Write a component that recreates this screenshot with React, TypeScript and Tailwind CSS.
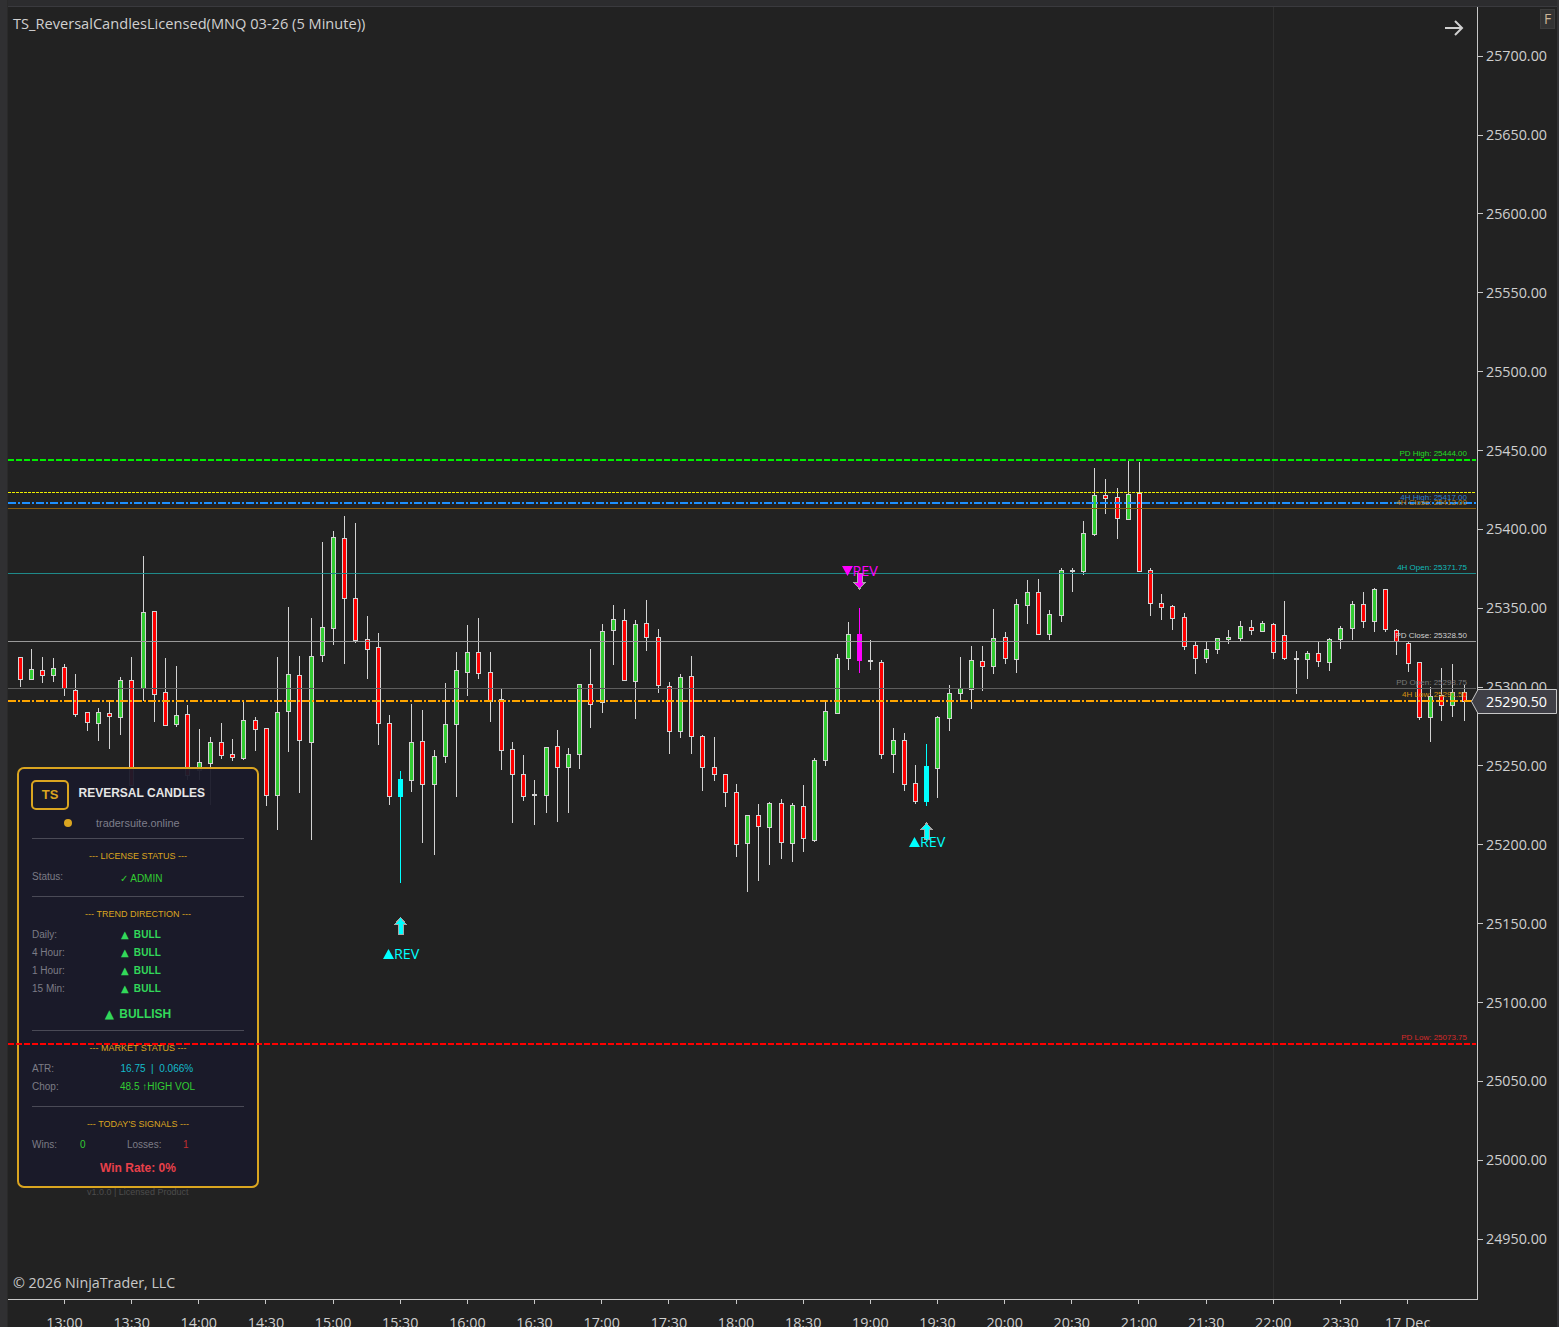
import React from "react";

type Kind = "r" | "g" | "c" | "m" | "d";
type Bar = [number, number, number, number, Kind];

const BARS: Bar[] = [
  [657,657,679,687,"r"],[649,669,679,679,"g"],[657,670,675,683,"r"],[658,668,675,682,"g"],[664,667,688,696,"r"],
  [674,690,714,717,"r"],[712,712,722,731,"r"],[708,712,723,741,"g"],[702,713,716,749,"r"],[677,680,717,735,"g"],
  [657,680,785,785,"r"],[556,612,688,701,"g"],[611,611,694,722,"r"],[658,692,725,726,"r"],[666,715,724,727,"g"],
  [705,714,775,780,"r"],[729,762,770,780,"g"],[737,742,763,805,"g"],[723,742,755,759,"r"],[739,754,757,761,"r"],
  [702,720,758,760,"g"],[717,720,729,751,"r"],[728,728,795,806,"r"],[657,712,795,830,"g"],[607,674,711,752,"g"],
  [656,675,740,793,"r"],[618,656,742,840,"g"],[542,627,655,662,"g"],[531,537,628,645,"g"],[516,538,598,664,"r"],
  [523,598,640,643,"r"],[616,639,649,679,"r"],[633,647,723,745,"r"],[715,723,796,805,"r"],[771,779,797,883,"c"],
  [704,742,780,792,"g"],[710,741,784,843,"r"],[750,756,784,855,"g"],[683,724,756,763,"g"],[652,670,724,797,"g"],
  [625,652,672,696,"g"],[618,652,673,679,"r"],[652,672,701,722,"r"],[688,699,750,770,"r"],[742,749,774,823,"r"],
  [755,774,796,801,"r"],[780,794,795,825,"d"],[747,747,795,813,"g"],[730,746,767,822,"r"],[748,754,767,813,"g"],
  [684,684,754,769,"g"],[649,684,704,728,"r"],[624,631,702,713,"g"],[605,619,630,665,"g"],[609,620,680,681,"r"],
  [620,624,681,719,"g"],[600,623,637,651,"r"],[629,637,685,693,"r"],[682,686,731,754,"r"],[674,677,731,738,"g"],
  [656,676,736,754,"r"],[735,736,767,791,"r"],[737,767,774,781,"r"],[774,774,792,807,"r"],[784,792,844,857,"r"],
  [815,815,843,892,"g"],[804,815,826,881,"r"],[802,803,827,865,"g"],[799,803,842,859,"r"],[803,805,843,862,"g"],
  [785,806,838,852,"r"],[758,760,840,842,"g"],[702,711,760,766,"g"],[654,658,713,714,"g"],[622,634,658,670,"g"],
  [608,634,661,673,"m"],[640,660,661,670,"d"],[660,662,754,759,"r"],[728,740,754,773,"g"],[733,740,784,791,"r"],
  [765,783,801,804,"r"],[744,766,802,806,"c"],[716,717,768,798,"g"],[685,693,718,731,"g"],[657,688,693,700,"g"],
  [646,660,689,709,"g"],[646,661,666,691,"r"],[609,638,666,674,"g"],[632,637,658,664,"r"],[599,604,659,673,"g"],
  [580,592,605,624,"g"],[579,592,634,635,"r"],[610,614,634,640,"g"],[568,570,615,622,"g"],[568,570,571,592,"d"],
  [521,533,571,575,"g"],[468,495,534,536,"g"],[479,495,498,514,"r"],[488,497,518,539,"r"],[459,494,519,519,"g"],
  [462,493,571,571,"r"],[568,570,603,616,"r"],[594,603,607,620,"r"],[605,606,618,630,"r"],[613,617,646,650,"r"],
  [642,645,658,674,"r"],[642,649,658,663,"g"],[638,638,649,654,"g"],[630,637,639,644,"g"],[621,626,638,641,"g"],
  [620,627,630,635,"r"],[621,623,631,632,"g"],[623,624,652,659,"r"],[601,635,658,660,"r"],[651,658,659,694,"d"],
  [651,653,659,679,"g"],[642,653,661,667,"r"],[638,639,662,671,"g"],[626,628,639,649,"g"],[601,604,628,640,"g"],
  [592,604,621,628,"r"],[588,589,621,632,"g"],[589,589,629,632,"r"],[629,630,641,655,"r"],[642,643,663,672,"r"],
  [662,662,717,720,"r"],[687,696,717,742,"g"],[668,695,705,721,"r"],[664,692,705,717,"g"],[685,692,701,721,"r"],
];

const WICK = "#d3d3d3";
const barX = (i: number) => Math.floor(20 + i * 11.194) + 0.5;

const LEVELS = [
  { y: 460, w: 2, c: "#00ee00", dash: "6 2" },
  { y: 492.5, w: 1, c: "#eeee00", dash: "3 1" },
  { y: 503, w: 2, c: "#1e90ff", dash: "8 2 2 2" },
  { y: 508.5, w: 1, c: "#8a5f10" },
  { y: 573.5, w: 1, c: "#1f8a8a" },
  { y: 641.5, w: 1, c: "#9a9a9a" },
  { y: 688.5, w: 1, c: "#5e5e5e" },
  { y: 701, w: 2, c: "#ffa500", dash: "8 2 2 2" },
  { y: 1044, w: 2, c: "#ff0000", dash: "6 2" },
];

const LEVEL_LABELS = [
  { y: 453.5, t: "PD High: 25444.00", c: "#22dd22" },
  { y: 497.5, t: "4H High: 25417.00", c: "#2f7fd0" },
  { y: 502.5, t: "4H Close: 25413.00", c: "#b8801c" },
  { y: 567.5, t: "4H Open: 25371.75", c: "#11bbbb" },
  { y: 635.5, t: "PD Close: 25328.50", c: "#d0d0d0" },
  { y: 682.5, t: "PD Open: 25298.75", c: "#787878" },
  { y: 694.5, t: "4H Low: 25291.50", c: "#d89410" },
  { y: 1037.5, t: "PD Low: 25073.75", c: "#d62a2a" },
];

const PRICES = ["25700.00","25650.00","25600.00","25550.00","25500.00","25450.00","25400.00","25350.00","25300.00","25250.00","25200.00","25150.00","25100.00","25050.00","25000.00","24950.00"];
const TIMES = ["13:00","13:30","14:00","14:30","15:00","15:30","16:00","16:30","17:00","17:30","18:00","18:30","19:00","19:30","20:00","20:30","21:00","21:30","22:00","23:30","17 Dec"];

function Candles() {
  return (
    <svg className="absolute inset-0 h-full w-full" viewBox="8 7 1469 1292" shapeRendering="crispEdges">
      <line x1="1273.5" y1="7" x2="1273.5" y2="1299" stroke="#2f2f2f" />
      {BARS.map(([hi, top, bot, lo, k], i) => {
        const x = barX(i);
        const special = k === "c" || k === "m";
        const col = k === "c" ? "#00ffff" : k === "m" ? "#ff00ff" : WICK;
        return (
          <g key={i}>
            <line x1={x} x2={x} y1={hi} y2={lo} stroke={col} />
            {special ? (
              <rect x={x - 2.5} y={top} width={5} height={bot - top} fill={col} />
            ) : k === "d" ? (
              <rect x={x - 2.5} y={top} width={5} height={2} fill={WICK} />
            ) : (
              <rect x={x - 2} y={top + 0.5} width={4} height={bot - top} fill={k === "r" ? "#ff0000" : "#32cd32"} stroke={WICK} />
            )}
          </g>
        );
      })}
    </svg>
  );
}

function Levels() {
  return (
    <svg className="pointer-events-none absolute inset-0 h-full w-full" viewBox="8 7 1469 1292" shapeRendering="crispEdges">
      {LEVELS.map((l) => (
        <line key={l.y} x1="8" x2="1476" y1={l.y} y2={l.y} stroke={l.c} strokeWidth={l.w} strokeDasharray={l.dash} />
      ))}
      <path d="M400.5 917.5 L406 924 H403 V934 H398 V924 H395 Z" fill="#00ffff" stroke="#a8a8a8" />
      <path d="M926.5 823 L932 829.5 H929 V839 H924 V829.5 H921 Z" fill="#00ffff" stroke="#a8a8a8" />
      <path d="M859.5 589 L865 582.5 H862 V573 H857 V582.5 H854 Z" fill="#ff00ff" stroke="#a8a8a8" />
      <polygon points="842,566 853,566 847.5,576" fill="#ff00ff" shapeRendering="auto" />
      <polygon points="909,847 920,847 914.5,837" fill="#00ffff" shapeRendering="auto" />
      <polygon points="383,959 394,959 388.5,949" fill="#00ffff" shapeRendering="auto" />
    </svg>
  );
}

function Divider({ top }: { top: string }) {
  return <div className={`h-px bg-[#4a4a56] ${top}`} />;
}

function Section({ title, mt }: { title: string; mt: string }) {
  return (
    <div className={`h-4 text-center text-[9px] leading-4 text-[#daa520] ${mt}`}>{`--- ${title} ---`}</div>
  );
}

function Tri({ className }: { className: string }) {
  return <span className={`font-['DejaVu_Sans',sans-serif] font-normal ${className}`}>▲</span>;
}

function TrendRow({ label }: { label: string }) {
  return (
    <div className="flex h-[18px] items-center">
      <span className="w-[89px] text-[10px] text-[#7c7c86]">{label}</span>
      <span className="whitespace-nowrap text-[10px] font-bold tracking-[0.15px] text-[#32d85a]">
        <Tri className="mr-[2px] text-[10px]" /> BULL
      </span>
    </div>
  );
}

function Panel() {
  return (
    <div className="absolute left-[9px] top-[760px] h-[421px] w-[242px] rounded-[7px] border-2 border-[#daa520] bg-[#1a1a2a]/95 px-[13px] font-['Liberation_Sans',Arial,sans-serif]">
      <div className="mt-[11px] -ml-px flex items-center gap-[9.5px]">
        <div className="flex h-[30px] w-[38px] items-center justify-center rounded-[5px] border-2 border-[#daa520] pb-[2px] text-[13px] font-bold leading-none text-[#daa520]">TS</div>
        <div className="-mt-[4px] text-[12px] font-bold text-[#e6e6e6]">REVERSAL CANDLES</div>
      </div>
      <div className="mt-[5px] flex h-4 items-center">
        <span className="ml-[32px] h-2 w-2 rounded-full bg-[#daa520]" />
        <span className="ml-[24px] text-[10.9px] text-[#7e7e8a]">tradersuite.online</span>
      </div>
      <Divider top="mt-[7px]" />
      <Section title="LICENSE STATUS" mt="mt-[9px]" />
      <div className="mt-[5px] flex h-[18px]">
        <span className="w-[88px] text-[10px] leading-[15px] text-[#7c7c86]">Status:</span>
        <span className="text-[10px] leading-[19px] text-[#32cd32]">✓ ADMIN</span>
      </div>
      <Divider top="mt-[9px]" />
      <Section title="TREND DIRECTION" mt="mt-[9px]" />
      <div className="mt-[3px] flex flex-col">
        <TrendRow label="Daily:" />
        <TrendRow label="4 Hour:" />
        <TrendRow label="1 Hour:" />
        <TrendRow label="15 Min:" />
      </div>
      <div className="mt-[7px] h-5 text-center text-[12px] font-bold leading-5 text-[#32d85a]">
        <Tri className="mr-[2px] text-[12px]" /> BULLISH
      </div>
      <Divider top="mt-[6px]" />
      <Section title="MARKET STATUS" mt="mt-[9px]" />
      <div className="mt-[3px] flex h-[18px] items-center">
        <span className="w-[88.5px] text-[10px] text-[#7c7c86]">ATR:</span>
        <span className="whitespace-pre text-[10px] text-[#14bccc]">16.75  |  0.066%</span>
      </div>
      <div className="flex h-[18px] items-center">
        <span className="w-[88px] text-[10px] text-[#7c7c86]">Chop:</span>
        <span className="text-[10px] text-[#32cd32]">48.5 ↑HIGH VOL</span>
      </div>
      <Divider top="mt-[11px]" />
      <Section title="TODAY'S SIGNALS" mt="mt-[9px]" />
      <div className="mt-[3px] flex h-[18px] items-center text-[10px]">
        <span className="w-[48px] text-[#7c7c86]">Wins:</span>
        <span className="w-[47px] text-[#32cd32]">0</span>
        <span className="w-[56px] text-[#7c7c86]">Losses:</span>
        <span className="text-[#c03030]">1</span>
      </div>
      <div className="mt-[5px] h-5 text-center text-[12px] font-bold leading-5 text-[#e8404a]">Win Rate: 0%</div>
    </div>
  );
}

export default function App() {
  return (
    <div className="flex h-[1327px] w-[1559px] overflow-hidden bg-[#222222] font-['Open_Sans',sans-serif] text-[#cfcfcf]">
      <div className="w-[8px] shrink-0 border-r border-[#2a2a2a] bg-[#303032]" />
      <div className="flex min-w-0 flex-1 flex-col">
        <div className="h-[7px] shrink-0 border-b border-[#3a3a3e] bg-[#2c2c2e]" />
        <div className="flex min-h-0 flex-1">
          <div className="flex w-[1470px] shrink-0 flex-col">
            <div className="relative h-[1293px] shrink-0 border-b border-r border-[#c8c8c8]">
              <Candles />
              <Panel />
              <Levels />
              <div className="absolute left-[79px] top-[1178px] whitespace-nowrap text-[9px] leading-[14px] text-[#4c4c4c] font-['Liberation_Sans',Arial,sans-serif]">v1.0.0 | Licensed Product</div>
              <div className="absolute left-[5px] top-[5px] whitespace-nowrap text-[14.62px] leading-[22px] text-[#d0d0d0]">TS_ReversalCandlesLicensed(MNQ 03-26 (5 Minute))</div>
              <div className="absolute left-[5px] top-[1265px] whitespace-nowrap text-[14.3px] leading-[22px] text-[#c8c8c8]">© 2026 NinjaTrader, LLC</div>
              <svg className="absolute left-[1436px] top-[13px] h-4 w-5" viewBox="0 0 20 16" fill="none" stroke="#d0d0d0" strokeWidth="2">
                <path d="M1 8 H18 M11 1 L18 8 L11 15" />
              </svg>
              {LEVEL_LABELS.map((l) => (
                <div
                  key={l.t}
                  className="absolute right-[10px] whitespace-nowrap text-[8px] leading-[10px] font-['Liberation_Sans',Arial,sans-serif]"
                  style={{ top: l.y - 12, color: l.c }}
                >
                  {l.t}
                </div>
              ))}
              <div className="absolute left-[844.5px] top-[554px] text-[14.3px] leading-5 text-[#ff00ff]">REV</div>
              <div className="absolute left-[912px] top-[825px] text-[14.3px] leading-5 text-[#00ffff]">REV</div>
              <div className="absolute left-[386px] top-[937px] text-[14.3px] leading-5 text-[#00ffff]">REV</div>
            </div>
            <div className="flex h-[27px] shrink-0 overflow-hidden pl-[22.9px]">
              {TIMES.map((t) => (
                <div key={t} className="flex w-[67.17px] shrink-0 flex-col items-center">
                  <div className="h-[4px] w-px shrink-0 bg-[#c8c8c8]" />
                  <div className="mt-[9px] shrink-0 whitespace-nowrap text-[14.3px] leading-5">{t}</div>
                </div>
              ))}
            </div>
          </div>
          <div className="relative flex-1">
            <div className="flex flex-col pt-[9.8px]">
              {PRICES.map((p) => (
                <div key={p} className="flex h-[78.87px] items-center">
                  <div className="h-px w-[5px] bg-[#c8c8c8]" />
                  <div className="ml-[3px] text-[14.3px] leading-5">{p}</div>
                </div>
              ))}
            </div>
            <div className="absolute -left-[7px] top-[682px] h-[25px] w-[86px]">
              <svg className="absolute inset-0 h-full w-full" viewBox="0 0 86 25">
                <path d="M0.5 12.5 L7 0.5 H85.5 V24.5 H7 Z" fill="#3f3f46" stroke="#c8c8c8" />
              </svg>
              <div className="absolute left-[15px] top-[3px] text-[14.3px] leading-5 text-white">25290.50</div>
            </div>
            <div className="absolute left-[62px] top-[2px] flex h-[20px] w-[15px] items-center justify-center border border-[#3c3c3c] bg-[#333333] text-[14px] leading-none text-[#cdb598]">F</div>
          </div>
        </div>
      </div>
      <div className="w-[2px] shrink-0 bg-[#333335]" />
    </div>
  );
}
